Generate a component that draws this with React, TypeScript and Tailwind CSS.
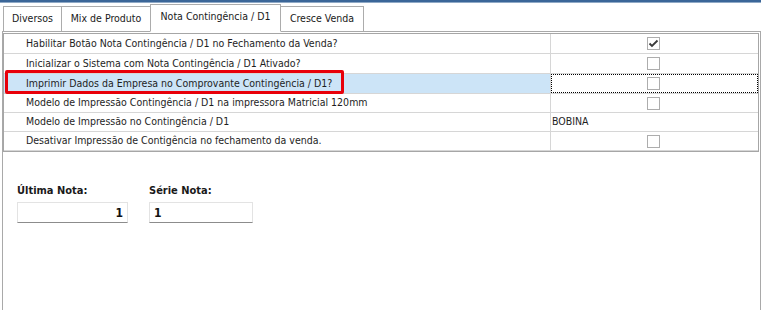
import React from "react";

type Row = {
  label: string;
  kind: "check" | "text";
  checked?: boolean;
  value?: string;
  h: string;
};

const rows: Row[] = [
  { label: "Habilitar Botão Nota Contingência / D1 no Fechamento da Venda?", kind: "check", checked: true, h: "h-[20px]" },
  { label: "Inicializar o Sistema com Nota Contingência / D1 Ativado?", kind: "check", h: "h-[20px]" },
  { label: "Imprimir Dados da Empresa no Comprovante Contingência / D1?", kind: "check", h: "h-[20px]" },
  { label: "Modelo de Impressão Contingência / D1 na impressora Matricial 120mm", kind: "check", h: "h-[19px]" },
  { label: "Modelo de Impressão no Contingência / D1", kind: "text", value: "BOBINA", h: "h-[19px]" },
  { label: "Desativar Impressão de Contigência no fechamento da venda.", kind: "check", h: "h-[19px]" },
];

function CheckBox({ checked }: { checked?: boolean }) {
  return (
    <div className="flex h-[13px] w-[13px] items-center justify-center border border-[#adadad] bg-white">
      {checked && (
        <svg width="11" height="11" viewBox="0 0 11 11">
          <path d="M1.5 5.5 L4 8 L9.5 2.5" fill="none" stroke="#3a3a3a" strokeWidth="1.8" />
        </svg>
      )}
    </div>
  );
}

function Tab({ label, width, active }: { label: string; width: string; active?: boolean }) {
  return (
    <div
      className={`${width} flex items-center justify-center border border-[#acacac] ${
        active
          ? "relative z-10 -mb-px h-[28px] border-b-white bg-white pb-[2px]"
          : "h-[25px] border-b-0 bg-white -ml-px first:ml-0"
      }`}
    >
      <span className="whitespace-nowrap text-[10.5px] text-[#1a1a1a]">{label}</span>
    </div>
  );
}

export default function App() {
  return (
    <div
      className="flex h-[310px] w-[761px] flex-col overflow-hidden bg-white"
      style={{ fontFamily: "'DejaVu Sans Condensed', 'Liberation Sans', Arial, sans-serif" }}
    >
      {/* window title strip */}
      <div className="h-[2px] bg-[#3b6698]" />
      <div className="h-px bg-[#8fa9c6]" />

      {/* tabs */}
      <div className="flex h-[28px] items-end pl-[3px]">
        <Tab label="Diversos" width="w-[59px]" />
        <Tab label="Mix de Produto" width="w-[90px]" />
        <Tab label="Nota Contingência / D1" width="w-[131px] -ml-px" active />
        <Tab label="Cresce Venda" width="w-[84px] -ml-px" />
      </div>

      {/* panel */}
      <div className="ml-[2px] flex w-[759px] flex-1 flex-col border border-b-0 border-[#a9a9a9] pt-px">
        <div className="relative mr-px border border-[#a6a6a6]">
          {rows.map((r, i) => {
            const selected = i === 2;
            return (
              <div key={r.label} className={`flex ${r.h} border-b border-[#d6d6d6] last:border-b-0`}>
                <div
                  className={`flex w-[547px] items-center border-r border-[#d6d6d6] pl-[22px] text-[10.5px] text-[#1e1e1e] ${
                    selected ? "bg-[#cce4f7]" : ""
                  }`}
                >
                  <span className="whitespace-nowrap">{r.label}</span>
                </div>
                <div
                  className={`flex flex-1 items-center ${
                    r.kind === "check" ? "justify-center pr-[2px]" : "pl-[1px]"
                  } ${selected ? "border border-dotted border-black" : ""}`}
                >
                  {r.kind === "check" ? (
                    <CheckBox checked={r.checked} />
                  ) : (
                    <span className="text-[10.5px] text-[#1e1e1e]">{r.value}</span>
                  )}
                </div>
              </div>
            );
          })}

          {/* highlight around the selected option */}
          <div className="absolute left-px top-[36px] h-[24px] w-[339px] rounded-[2px] border-[3px] border-[#e8000a]" />
        </div>

        {/* numbering fields */}
        <div className="mt-[31px] flex gap-[21px] pl-[14px]">
          <div className="flex flex-col">
            <span className="text-[11px] font-bold leading-[15px] text-[#1a1a1a]">Última Nota:</span>
            <div className="mt-[4px] flex h-[21px] w-[111px] items-center justify-end border border-[#e3e3e3] border-b-[#8c8c8c] pr-[4px]">
              <span className="text-[12px] font-bold text-[#111]">1</span>
            </div>
          </div>
          <div className="flex flex-col">
            <span className="text-[11px] font-bold leading-[15px] text-[#1a1a1a]">Série Nota:</span>
            <div className="mt-[4px] flex h-[21px] w-[104px] items-center border border-[#e3e3e3] border-b-[#8c8c8c] pl-[4px]">
              <span className="text-[12px] font-bold text-[#111]">1</span>
            </div>
          </div>
        </div>
      </div>
    </div>
  );
}
